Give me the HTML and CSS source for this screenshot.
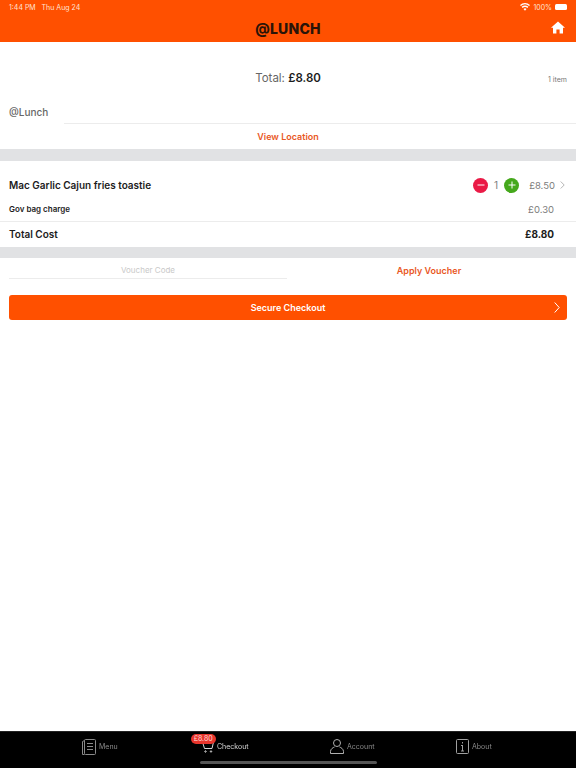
FILE: index.html
```html
<!DOCTYPE html>
<html lang="en">
<head>
    <meta charset="UTF-8">
    <meta name="viewport" content="width=device-width, initial-scale=1.0">
    <title>@Lunch Checkout</title>
    <link rel="stylesheet" href="styles.css">
</head>
<body>
    <div class="app">
        <header class="top-bar">
            <div class="status-bar">
                <span class="status-time">1:44 PM &nbsp; Thu Aug 24</span>
                <span class="status-right">
                    <svg class="wifi" width="10" height="8" viewBox="0 0 20 16"><path d="M10 15.5 L7 12 A4.5 4.5 0 0 1 13 12 Z M5.2 10 L3.2 7.7 A10.5 10.5 0 0 1 16.8 7.7 L14.8 10 A7.5 7.5 0 0 0 5.2 10 Z M1.8 6 L0 3.9 A15.5 15.5 0 0 1 20 3.9 L18.2 6 A12.7 12.7 0 0 0 1.8 6 Z" fill="#fff"/></svg>
                    <span>100%</span>
                    <span class="battery"></span>
                </span>
            </div>
            <div class="title-row">
                <h1>@LUNCH</h1>
                <svg class="home-icon" width="14" height="13" viewBox="0 0 14 13"><path d="M7 0.5 L14 6.8 L12 6.8 L12 12.5 L8.6 12.5 L8.6 8.5 L5.4 8.5 L5.4 12.5 L2 12.5 L2 6.8 L0 6.8 Z" fill="#fff"/></svg>
            </div>
        </header>

        <section class="summary">
            <div class="total-row">
                <p class="total">Total: <strong>£8.80</strong></p>
                <span class="item-count">1 item</span>
            </div>
            <div class="venue-row">
                <span class="venue-name">@Lunch</span>
                <span class="venue-line"></span>
            </div>
            <a class="view-location">View Location</a>
        </section>

        <section class="items">
            <div class="item-row">
                <span class="item-name">Mac Garlic Cajun fries toastie</span>
                <span class="qty">
                    <span class="qty-btn minus"><svg width="8" height="8" viewBox="0 0 8 8"><path d="M0.5 4 H7.5" stroke="#fff" stroke-width="1"/></svg></span>
                    <span class="qty-num">1</span>
                    <span class="qty-btn plus"><svg width="8" height="8" viewBox="0 0 8 8"><path d="M0.5 4 H7.5 M4 0.5 V7.5" stroke="#fff" stroke-width="1"/></svg></span>
                </span>
                <span class="price">£8.50</span>
                <svg class="chevron" width="5" height="8" viewBox="0 0 5 8"><path d="M0.7 0.5 L4.2 4 L0.7 7.5" fill="none" stroke="#b5b5b5" stroke-width="1"/></svg>
            </div>
            <div class="charge-row">
                <span class="charge-name">Gov bag charge</span>
                <span class="price">£0.30</span>
            </div>
            <div class="cost-row">
                <span class="cost-name">Total Cost</span>
                <span class="cost-price">£8.80</span>
            </div>
        </section>

        <section class="voucher">
            <span class="voucher-input">Voucher Code</span>
            <a class="apply-voucher">Apply Voucher</a>
        </section>

        <div class="checkout-wrap">
            <div class="checkout-btn">
                <span>Secure Checkout</span>
                <svg class="checkout-arrow" width="6" height="11" viewBox="0 0 6 11"><path d="M0.7 0.5 L5.2 5.5 L0.7 10.5" fill="none" stroke="#fff" stroke-width="1"/></svg>
            </div>
        </div>

        <nav class="tab-bar">
            <div class="tab">
                <svg width="14" height="16" viewBox="0 0 14 16" fill="none" stroke="#8a8a8a" stroke-width="1"><rect x="2.5" y="0.5" width="11" height="15" rx="1"/><path d="M2.5 1.5 L0.5 2.5 V15.5 H2.5 M5 4.5 H11 M5 7.5 H11 M5 10.5 H11"/></svg>
                <span class="tab-label">Menu</span>
            </div>
            <div class="tab active">
                <span class="cart-wrap">
                    <span class="badge">£8.80</span>
                    <svg width="12" height="12" viewBox="0 0 12 12" fill="none" stroke="#d8d8d8" stroke-width="1"><path d="M0.5 1 H11.5 L10 7.5 H2.5 Z"/><circle cx="3.5" cy="10.5" r="0.7"/><circle cx="9" cy="10.5" r="0.7"/></svg>
                </span>
                <span class="tab-label">Checkout</span>
            </div>
            <div class="tab">
                <svg width="14" height="15" viewBox="0 0 14 15" fill="none" stroke="#b0b0b0" stroke-width="1"><circle cx="7" cy="4" r="3.5"/><path d="M0.5 14.5 V12.5 C0.5 10 3 8.5 4.5 8 M13.5 14.5 V12.5 C13.5 10 11 8.5 9.5 8 M0.5 14.5 H13.5"/></svg>
                <span class="tab-label">Account</span>
            </div>
            <div class="tab">
                <svg width="13" height="15" viewBox="0 0 13 15" fill="none" stroke="#a0a0a0" stroke-width="1"><rect x="0.5" y="0.5" width="12" height="14" rx="1"/><path d="M6.5 3 V4.5 M6.5 6 V12 M5 6.5 H6.5 M5 12 H8"/></svg>
                <span class="tab-label">About</span>
            </div>
            <span class="home-indicator"></span>
        </nav>
    </div>
</body>
</html>
```

FILE: styles.css
```css
:root {
    --orange: #ff5000;
    --link: #e9581f;
    --grey-band: #e1e2e4;
    --line: #ececec;
    --text: #1c1c1c;
    --muted: #7d7d7d;
}

html, body {
    margin: 0;
    height: 100%;
}

body {
    font-family: "Inter", "Liberation Sans", sans-serif;
    color: var(--text);
    background: #fff;
}

p, h1 {
    margin: 0;
}

.app {
    display: flex;
    flex-direction: column;
    height: 768px;
    overflow: hidden;
}

.top-bar {
    background: var(--orange);
    height: 42px;
    color: #fff;
}

.status-bar {
    display: flex;
    justify-content: space-between;
    align-items: center;
    height: 14px;
    padding: 0 9px;
    font-size: 7px;
    color: #ffe3d4;
}

.status-right {
    display: flex;
    align-items: center;
    gap: 3px;
}

.battery {
    width: 12px;
    height: 6px;
    border-radius: 1.5px;
    background: #fff;
    display: block;
}

.title-row {
    position: relative;
    height: 28px;
    display: flex;
    align-items: center;
    justify-content: center;
}

.title-row h1 {
    font-size: 14px;
    font-weight: 800;
    color: #2a1408;
    letter-spacing: 0.2px;
}

.home-icon {
    position: absolute;
    right: 11px;
    top: 7px;
}

.summary {
    height: 107px;
    display: flex;
    flex-direction: column;
}

.total-row {
    position: relative;
    height: 69px;
    padding-top: 1px;
    display: flex;
    align-items: center;
    justify-content: center;
}

.total {
    font-size: 11.5px;
    color: #666;
}

.total strong {
    color: var(--text);
    font-weight: 600;
}

.item-count {
    position: absolute;
    right: 9px;
    top: 33px;
    font-size: 7px;
    color: #777;
}

.venue-row {
    display: flex;
    align-items: stretch;
    height: 12px;
}

.venue-name {
    width: 64px;
    padding-left: 9px;
    box-sizing: border-box;
    font-size: 10px;
    font-weight: 500;
    color: #666;
    line-height: 0;
}

.venue-line {
    flex: 1;
    border-bottom: 1px solid var(--line);
}

.view-location {
    height: 25px;
    display: flex;
    align-items: center;
    justify-content: center;
    font-size: 9px;
    font-weight: 600;
    color: var(--link);
}

.items {
    border-top: 12px solid var(--grey-band);
    border-bottom: 11px solid var(--grey-band);
}

.item-row, .charge-row, .cost-row {
    display: flex;
    align-items: center;
    padding: 0 22px 0 9px;
}

.item-row {
    height: 24px;
    padding-top: 12px;
    padding-right: 11px;
}

.item-name {
    flex: 1;
    font-size: 10px;
    font-weight: 600;
}

.qty {
    display: flex;
    align-items: center;
    gap: 6px;
    margin-right: 10px;
}

.qty-btn {
    width: 15px;
    height: 15px;
    border-radius: 50%;
    display: flex;
    align-items: center;
    justify-content: center;
}

.minus {
    background: #ea1a46;
}

.plus {
    background: #45a81c;
}

.qty-num {
    font-size: 10px;
    color: var(--muted);
}

.price {
    font-size: 9.5px;
    color: var(--muted);
}

.chevron {
    margin-left: 5px;
}

.charge-row {
    height: 24px;
    justify-content: space-between;
}

.charge-name {
    font-size: 8px;
    font-weight: 600;
}

.cost-row {
    height: 23px;
    padding-bottom: 2px;
    border-top: 1px solid var(--line);
    justify-content: space-between;
}

.cost-name {
    font-size: 10px;
    font-weight: 600;
}

.cost-price {
    font-size: 10px;
    font-weight: 700;
}

.voucher {
    display: flex;
    height: 37px;
    box-sizing: border-box;
    padding: 0 9px;
}

.voucher-input {
    width: 278px;
    height: 21px;
    box-sizing: border-box;
    padding-top: 3px;
    border-bottom: 1px solid var(--line);
    font-size: 8px;
    color: #c9c9c9;
    display: flex;
    align-items: center;
    justify-content: center;
}

.apply-voucher {
    flex: 1;
    height: 24px;
    padding-left: 4px;
    display: flex;
    align-items: center;
    justify-content: center;
    font-size: 9px;
    font-weight: 600;
    color: var(--link);
}

.checkout-wrap {
    flex: 1;
    padding: 0 9px;
}

.checkout-btn {
    position: relative;
    height: 25px;
    background: var(--orange);
    border-radius: 3px;
    display: flex;
    align-items: center;
    justify-content: center;
    color: #fff;
    font-size: 9px;
    font-weight: 600;
}

.checkout-arrow {
    position: absolute;
    right: 7px;
    top: 7px;
}

.tab-bar {
    position: relative;
    height: 37px;
    background: #000;
    display: grid;
    grid-template-columns: 127px 124px 130px 114px;
    padding-left: 36px;
    box-sizing: border-box;
    align-items: start;
    border-top: 1px solid #222;
}

.tab {
    display: flex;
    align-items: center;
    justify-content: center;
    gap: 3px;
    height: 29px;
    font-size: 7px;
    color: #8a8a8a;
}

.tab-label {
    will-change: transform;
}

.tab.active {
    color: #d8d8d8;
}

.cart-wrap {
    position: relative;
    display: flex;
}

.badge {
    position: absolute;
    left: -11px;
    top: -7px;
    width: 25px;
    height: 10px;
    border-radius: 5px;
    background: #e8352c;
    color: #ffd9d4;
    font-size: 7px;
    display: flex;
    align-items: center;
    justify-content: center;
}

.home-indicator {
    position: absolute;
    left: 200px;
    bottom: 4px;
    width: 177px;
    height: 3px;
    border-radius: 2px;
    background: #555;
}
```
